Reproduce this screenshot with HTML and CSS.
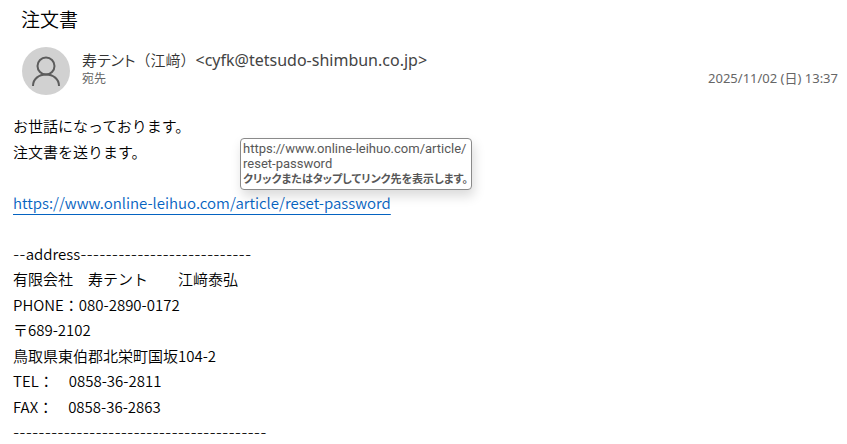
FILE: index.html
```html
<!DOCTYPE html>
<html lang="ja">
<head>
<meta charset="utf-8">
<title>注文書</title>
<link rel="stylesheet" href="styles.css">
</head>
<body>
<main class="message">
  <h1 class="subject">注文書</h1>
  <header class="meta">
    <svg class="avatar" viewBox="0 0 48 48" aria-hidden="true">
      <circle class="avatar-bg" cx="24" cy="24" r="24"/>
      <circle class="avatar-line" cx="24" cy="19" r="8.500"/>
      <path class="avatar-line" d="M11 39C11 32 16.800 27.500 24 27.500S37 32 37 39"/>
    </svg>
    <div class="people">
      <div class="sender"><span>寿<span class="kana">テント</span>（江﨑）</span><span class="email">&lt;cyfk@tetsudo-shimbun.co.jp&gt;</span></div>
      <div class="recipient">宛先</div>
    </div>
    <time class="date" datetime="2025-11-02T13:37">2025/11/02 (日) 13:37</time>
  </header>
  <div class="body">
    <p>お世話になっております。</p>
    <p>注文書を送ります。</p>
    <p></p>
    <p class="link-line"><a class="link" href="https://www.online-leihuo.com/article/reset-password" aria-describedby="tip">https://www.online-leihuo.com/article/reset-password</a>
      <span class="tooltip" id="tip" role="tooltip">https://www.online-leihuo.com/article/<br>reset-password<br><strong>クリックまたはタップしてリンク先を表示します。</strong></span></p>
    <p></p>
    <p><span class="dashes">--</span>address<span class="dashes">---------------------------</span></p>
    <p>有限会社　寿テント　　江﨑泰弘</p>
    <p>PHONE：080-2890-0172</p>
    <p>〒689-2102</p>
    <p>鳥取県東伯郡北栄町国坂104-2</p>
    <p>TEL：　0858-36-2811</p>
    <p>FAX：　0858-36-2863</p>
    <p><span class="dashes">----------------------------------------</span></p>
  </div>
</main>
</body>
</html>
```
FILE: styles.css
```css
* { box-sizing: border-box; }
body {
  margin: 0;
  background: #fff;
  color: #000;
  font-family: "Noto Sans", "Noto Sans CJK JP", sans-serif;
}
p { margin: 0; }
.subject {
  margin: 0;
  padding: 5px 21px 0;
  font-family: "Noto Sans CJK JP", sans-serif;
  font-size: 19px;
  font-weight: 350;
  line-height: 28px;
}
.meta {
  display: flex;
  align-items: flex-start;
  margin-top: 14px;
  padding: 0 9px 0 22px;
}
.avatar { width: 48px; height: 48px; flex: none; }
.avatar-bg { fill: #d1d1d1; }
.avatar-line { fill: none; stroke: #5c5c5c; stroke-width: 2; }
.people { margin-left: 12px; padding-top: 3px; flex: 1; }
.sender {
  display: flex;
  font-size: 15px;
  font-weight: 350;
  line-height: 20px;
  color: #333;
}
.kana { font-feature-settings: "palt"; }
.email { font-size: 16px; font-weight: 400; color: #444; }
.recipient { font-size: 12px; line-height: 18px; color: #666; }
.date { padding-top: 23px; font-size: 13px; line-height: 16px; color: #666; }
.body {
  display: grid;
  grid-auto-rows: 26px 25px;
  margin-top: 18px;
  padding: 0 13px;
  font-family: "Noto Sans CJK JP", sans-serif;
  font-weight: 350;
  font-size: 15px;
  line-height: 25px;
}
.link-line { position: relative; }
.link {
  color: #0563c1;
  text-decoration: underline;
  text-underline-offset: 5px;
  text-decoration-skip-ink: none;
}
.dashes { font-family: Inter, sans-serif; font-size: 14px; }
.tooltip {
  position: absolute;
  left: 227px;
  bottom: 25px;
  padding: 2px 3px 2px 2px;
  border: 1px solid #8a8a8a;
  border-radius: 4px;
  background: #fff;
  box-shadow: 2px 6px 12px rgba(0, 0, 0, 0.15);
  color: #575757;
  font-family: Roboto, "Noto Sans CJK JP", sans-serif;
  font-size: 13px;
  font-weight: 400;
  line-height: 15px;
  white-space: nowrap;
}
.tooltip strong { font-size: 11px; font-feature-settings: "palt"; }
```
